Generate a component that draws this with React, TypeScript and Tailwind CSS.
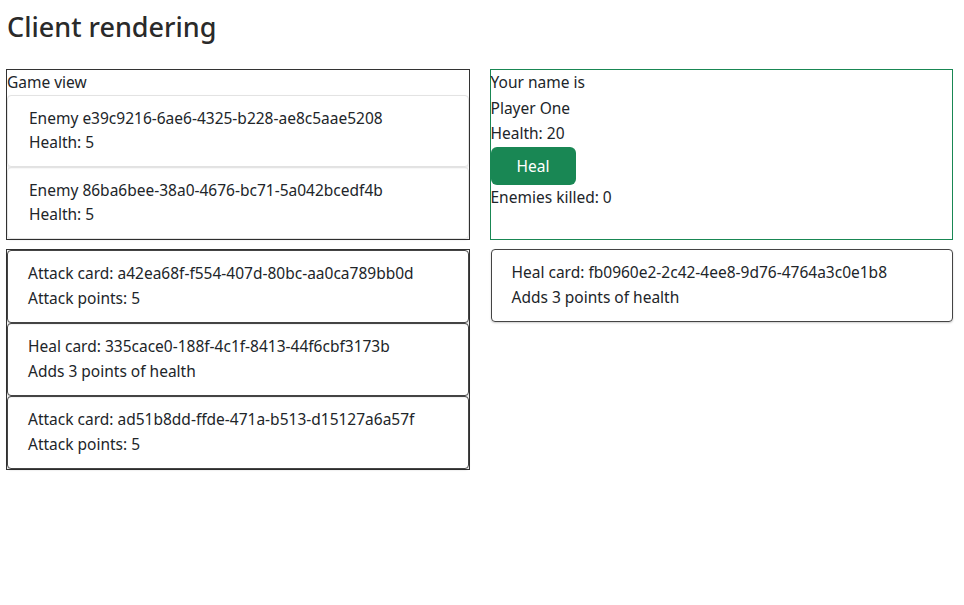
import React from "react";

const font = { fontFamily: '"Noto Sans", "Open Sans", sans-serif' };

function EnemyItem({ id }: { id: string }) {
  return (
    <div className="rounded-[4px] border border-[#e3e3e3] shadow-[0_1px_2px_rgba(0,0,0,0.12)] pl-[21px] pr-4 pt-[10px] pb-[11px] leading-[25px]">
      <div className="h-[24px] leading-[24px]">Enemy {id}</div>
      <div>Health: 5</div>
    </div>
  );
}

function Card({ title, sub }: { title: string; sub: string }) {
  return (
    <div className="rounded-[4px] border border-[#444] shadow-[0_1px_2px_rgba(0,0,0,0.2)] pl-[20px] pr-4 pt-[10px] pb-[11px] leading-[25px]">
      <div>{title}</div>
      <div>{sub}</div>
    </div>
  );
}

export default function App() {
  return (
    <div className="min-h-[605px] bg-white text-[15.5px] text-[#212529] pl-[6px] pr-[11px] pt-[10px]" style={font}>
      <h1 className="text-[27px] font-medium leading-[34px] text-[#2a2a2a] pl-[1px] mb-[25px]">Client rendering</h1>
      <div className="grid grid-cols-2 gap-[20px]">
        <div className="border border-[#333]">
          <div className="leading-[25px]">Game view</div>
          <EnemyItem id="e39c9216-6ae6-4325-b228-ae8c5aae5208" />
          <EnemyItem id="86ba6bee-38a0-4676-bc71-5a042bcedf4b" />
        </div>
        <div className="border border-[#198754]">
          <div className="leading-[25px]">Your name is</div>
          <div className="leading-[25px] mt-[1px]">Player One</div>
          <div className="leading-[25px]">Health: 20</div>
          <button className="mt-[1px] h-[38px] w-[85px] rounded-[6px] bg-[#198754] text-white leading-[24px]">Heal</button>
          <div className="leading-[25px]">Enemies killed: 0</div>
        </div>
      </div>
      <div className="grid grid-cols-2 gap-[20px] mt-[9px] items-start">
        <div className="border border-[#333]">
          <Card title="Attack card: a42ea68f-f554-407d-80bc-aa0ca789bb0d" sub="Attack points: 5" />
          <Card title="Heal card: 335cace0-188f-4c1f-8413-44f6cbf3173b" sub="Adds 3 points of health" />
          <Card title="Attack card: ad51b8dd-ffde-471a-b513-d15127a6a57f" sub="Attack points: 5" />
        </div>
        <div className="pl-[1px]">
          <Card title="Heal card: fb0960e2-2c42-4ee8-9d76-4764a3c0e1b8" sub="Adds 3 points of health" />
        </div>
      </div>
    </div>
  );
}
